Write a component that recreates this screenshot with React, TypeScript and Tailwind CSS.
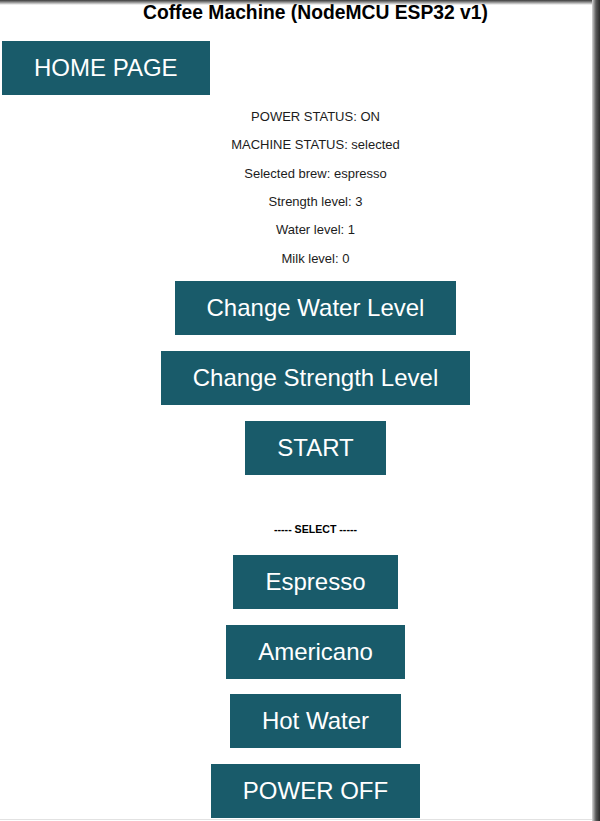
import React from 'react';

const Btn: React.FC<{ children: React.ReactNode }> = ({ children }) => (
  <button className="bg-[#195b6a] text-white text-[24px] leading-[28px] px-[32px] py-[13px] whitespace-nowrap">
    {children}
  </button>
);

const status = [
  'POWER STATUS: ON',
  'MACHINE STATUS: selected',
  'Selected brew: espresso',
  'Strength level: 3',
  'Water level: 1',
  'Milk level: 0',
];

export default function App() {
  return (
    <div className="relative w-[600px] h-[821px] overflow-hidden bg-white font-['Liberation_Sans',Arial,sans-serif]">
      <div className="w-[631px] flex flex-col items-center">
        <h1 className="mt-[2px] text-[19.3px] leading-[22px] font-bold text-black">
          Coffee Machine (NodeMCU ESP32 v1)
        </h1>

        <div className="self-start ml-[2px] mt-[17px]">
          <Btn>HOME PAGE</Btn>
        </div>

        <div className="mt-[8px] flex flex-col items-center text-[13px] leading-[28.33px] text-[#1c1c1c]">
          {status.map((s) => (
            <p key={s}>{s}</p>
          ))}
        </div>

        <div className="mt-[8px] flex flex-col items-center gap-[16px]">
          <Btn>Change Water Level</Btn>
          <Btn>Change Strength Level</Btn>
          <Btn>START</Btn>
        </div>

        <p className="mt-[48px] text-[10.6px] leading-[12px] font-bold text-black">----- SELECT -----</p>

        <div className="mt-[20px] flex flex-col items-center gap-[15.6px]">
          <Btn>Espresso</Btn>
          <Btn>Americano</Btn>
          <Btn>Hot Water</Btn>
          <Btn>POWER OFF</Btn>
        </div>
      </div>

      {/* window shadow edges */}
      <div className="pointer-events-none absolute top-0 left-0 right-0 h-[5px] bg-linear-to-b from-[#3c3c3c] via-[#9a9a9a] to-transparent" />
      <div className="pointer-events-none absolute top-0 bottom-0 right-0 w-[8px] bg-linear-to-l from-[#2a2a2a] via-[#5a5a5a] to-[#d8d8d8]" />
      <div className="pointer-events-none absolute bottom-[1px] left-0 right-[8px] h-px bg-[#e2e2e2]" />
    </div>
  );
}
